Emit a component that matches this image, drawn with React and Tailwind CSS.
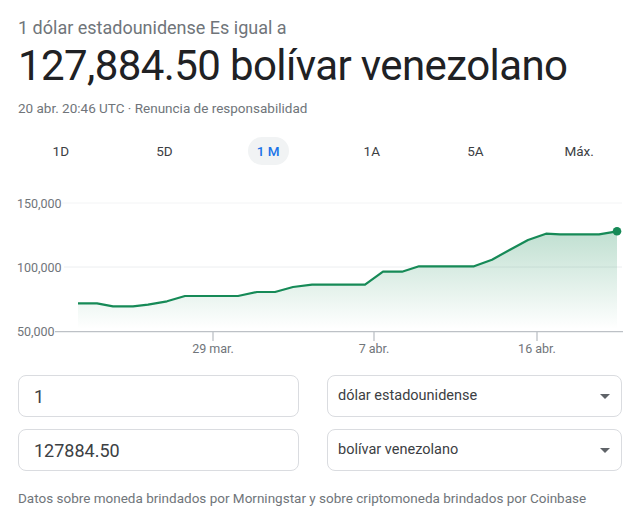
import React from 'react';

const ranges = ['1D', '5D', '1 M', '1A', '5A', 'Máx.'];

// price points in page coords (x, y) for the 1M series
const points = [
  [78, 304.3], [97, 304.3], [113, 307.3], [133, 307.3], [148, 305.7], [167, 302.3],
  [185, 297], [238, 297], [257, 293], [275, 293], [293, 288], [312, 285.7],
  [365, 285.7], [383, 272.7], [402, 272.7], [419, 267.3], [474, 267.3], [492, 260.7],
  [510, 250.7], [528, 241], [546, 234.7], [560, 235.3], [599, 235.3], [617, 232.3],
];

const Chart = () => {
  const line = points.map(([x, y], i) => `${i ? 'L' : 'M'}${x} ${y}`).join(' ');
  const area = `${line} L617 330 L78 330 Z`;
  const font = { fontFamily: 'Roboto, sans-serif' };

  return (
    <svg width="640" height="175" viewBox="0 190 640 175" className="block">
      <defs>
        <linearGradient id="fill" x1="0" y1="0" x2="0" y2="1">
          <stop offset="0%" stopColor="#1e8e5a" stopOpacity="0.28" />
          <stop offset="100%" stopColor="#1e8e5a" stopOpacity="0" />
        </linearGradient>
      </defs>

      <line x1="62" y1="204" x2="622" y2="204" stroke="#f3f4f5" strokeWidth="1" />
      <line x1="64" y1="268" x2="622" y2="268" stroke="#eceef0" strokeWidth="1" />

      <g fill="#70757a" fontSize="12.5" style={font}>
        <text x="17" y="208.5">150,000</text>
        <text x="17" y="272.5">100,000</text>
        <text x="17" y="337">50,000</text>
      </g>

      <path d={area} fill="url(#fill)" />
      <path d={line} fill="none" stroke="#168a57" strokeWidth="2.2" strokeLinejoin="round" />
      <circle cx="617" cy="232.3" r="4.3" fill="#168a57" />

      <line x1="55" y1="332.7" x2="623" y2="332.7" stroke="#bdc1c6" strokeWidth="1.3" />
      <g stroke="#bdc1c6" strokeWidth="1.3">
        <line x1="213" y1="333" x2="213" y2="342" />
        <line x1="374" y1="333" x2="374" y2="342" />
        <line x1="537" y1="333" x2="537" y2="342" />
      </g>
      <g fill="#70757a" fontSize="12.5" textAnchor="middle" style={font}>
        <text x="213" y="354">29 mar.</text>
        <text x="374" y="354">7 abr.</text>
        <text x="537" y="354">16 abr.</text>
      </g>
    </svg>
  );
};

const Field = ({ value }) => (
  <div className="h-[42px] rounded-lg border border-[#dadce0] flex items-center px-[15px] text-[18px] text-[#3c4043]">
    {value}
  </div>
);

const Select = ({ label }) => (
  <div className="h-[42px] rounded-lg border border-[#dadce0] flex items-center justify-between pl-[10px] pr-[11px] text-[14.5px] text-[#3c4043]">
    <span>{label}</span>
    <span className="w-0 h-0 border-l-[5px] border-r-[5px] border-t-[5px] border-l-transparent border-r-transparent border-t-[#5f6368]" />
  </div>
);

export default function App() {
  return (
    <div className="w-[640px] h-[523px] bg-white overflow-hidden" style={{ fontFamily: 'Roboto, "Liberation Sans", sans-serif' }}>
      <div className="px-[18px] pt-[16px]">
        <div className="text-[18px] leading-[24px] text-[#70757a]">1 dólar estadounidense Es igual a</div>
        <div className="text-[42px] leading-[52px] tracking-[-0.6px] text-[#202124]">127,884.50 bolívar venezolano</div>
        <div className="mt-[7px] text-[13.5px] leading-[18px] text-[#70757a]">
          20 abr. 20:46 UTC · Renuncia de responsabilidad
        </div>
      </div>

      {/* range tabs */}
      <div className="mt-[20px] px-[9px] grid grid-cols-6">
        {ranges.map((r) => (
          <div key={r} className="flex justify-center">
            <span
              className={
                r === '1 M'
                  ? 'h-[28px] px-[9px] rounded-full bg-[#f1f3f4] flex items-center text-[13.5px] font-medium text-[#1a73e8]'
                  : 'h-[28px] flex items-center text-[13.5px] text-[#3c4043]'
              }
            >
              {r}
            </span>
          </div>
        ))}
      </div>

      <div className="mt-[24px]">
        <Chart />
      </div>

      {/* converter */}
      <div className="mt-[11px] pl-[18px] grid grid-cols-[281px_295px] gap-x-[28px] gap-y-[12px]">
        <Field value="1" />
        <Select label="dólar estadounidense" />
        <Field value="127884.50" />
        <Select label="bolívar venezolano" />
      </div>

      <div className="mt-[18px] px-[18px] text-[13.5px] leading-[18px] text-[#70757a]">
        Datos sobre moneda brindados por Morningstar y sobre criptomoneda brindados por Coinbase
      </div>
    </div>
  );
}
